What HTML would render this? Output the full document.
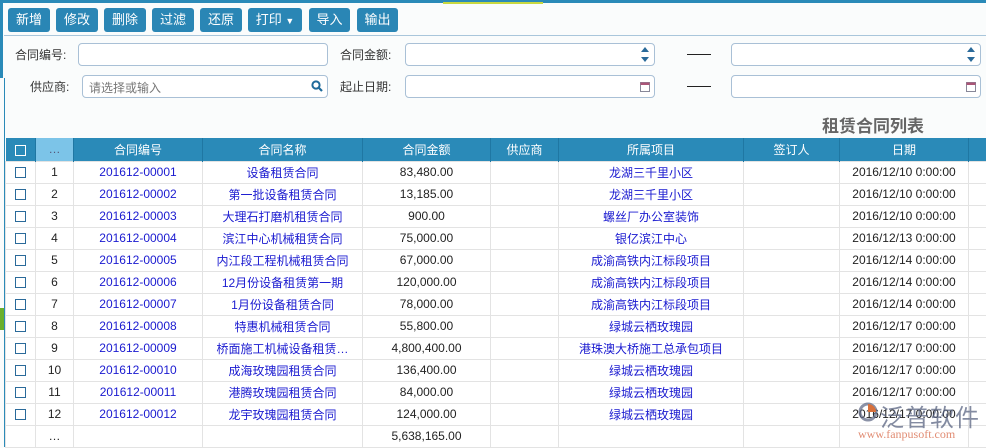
<!DOCTYPE html>
<html><head><meta charset="utf-8"><style>
*{box-sizing:border-box;margin:0;padding:0}
body{width:986px;height:447px;overflow:hidden;background:#fafcfc;font-family:"Liberation Sans","Noto Sans CJK SC",sans-serif;font-size:12px;color:#333;position:relative}
.top{position:absolute;left:0;top:0;width:986px;height:3px;background:#2a8ab8}
.top2{position:absolute;left:443px;top:2px;width:100px;height:2px;background:#c8d840}
.lstrip{position:absolute;left:0;top:0;width:3px;height:78px;background:#2a8ab8}
.lline{position:absolute;left:4px;top:78px;width:1px;height:369px;background:#2a8ab8}
.green{position:absolute;left:0;top:308px;width:4px;height:22px;background:#6ab02c}
.btn{position:absolute;top:8px;height:24px;background:#2a86b5;color:#fff;border-radius:3px;font-size:13px;text-align:center;line-height:24px}
.sep{position:absolute;left:4px;top:35px;width:982px;height:1px;background:#a9c6db}
.lbl{position:absolute;font-size:12px;color:#333}
.inp{position:absolute;height:23px;border:1px solid #a9c0d6;border-radius:4px;background:#fff}
.dash{position:absolute;width:24px;height:1px;background:#222}
.title{position:absolute;left:822px;top:112px;font-size:17px;font-weight:bold;color:#666}
table{position:absolute;left:5px;top:138px;border-collapse:collapse;table-layout:fixed;width:981px}
th{background:#2a8ab8;color:#fff;font-weight:normal;height:23px;border-right:1px solid #1f77a3;font-size:12px}
td{height:22px;border:1px solid #e3e3e3;text-align:center;font-size:12px;color:#222;background:#fff;white-space:nowrap;overflow:hidden}
td.b{color:#1a1ad0}
.cb{display:inline-block;width:11px;height:11px;border:1px solid #2a6a9a;vertical-align:middle}
th .cb{border-color:#fff;border-width:1.5px;width:11px;height:11px}
.sp{position:absolute;right:5px;top:2px;width:8px;height:17px}
.wm{position:absolute;left:858px;top:398px;color:rgba(90,100,130,.75);font-size:24px;letter-spacing:1px}
.wm2{position:absolute;left:858px;top:427px;color:rgba(220,120,90,.85);font-size:12px;font-family:"Liberation Serif",serif}
</style></head><body>
<div class="top"></div><div class="top2"></div><div class="lstrip"></div><div class="lline"></div><div class="green"></div>
<div class="btn" style="left:8px;width:42px">新增</div>
<div class="btn" style="left:56px;width:42px">修改</div>
<div class="btn" style="left:104px;width:42px">删除</div>
<div class="btn" style="left:152px;width:42px">过滤</div>
<div class="btn" style="left:200px;width:42px">还原</div>
<div class="btn" style="left:248px;width:54px">打印 <span style="font-size:9px">▼</span></div>
<div class="btn" style="left:309px;width:41px">导入</div>
<div class="btn" style="left:357px;width:41px">输出</div>
<div class="sep"></div>
<div class="lbl" style="left:15px;top:46px">合同编号:</div>
<div class="inp" style="left:78px;top:43px;width:250px"></div>
<div class="lbl" style="left:340px;top:46px">合同金额:</div>
<div class="inp" style="left:405px;top:43px;width:250px"><svg class="sp" viewBox="0 0 8 17"><path d="M0 6L4 1L8 6Z" fill="#2a6a9a"/><path d="M0 11L8 11L4 16Z" fill="#2a6a9a"/></svg></div>
<div class="dash" style="left:687px;top:54px"></div>
<div class="inp" style="left:731px;top:43px;width:250px"><svg class="sp" viewBox="0 0 8 17"><path d="M0 6L4 1L8 6Z" fill="#2a6a9a"/><path d="M0 11L8 11L4 16Z" fill="#2a6a9a"/></svg></div>
<div class="lbl" style="left:30px;top:78px">供应商:</div>
<div class="inp" style="left:82px;top:75px;width:246px"><span style="position:absolute;left:6px;top:3px;color:#777">请选择或输入</span><svg style="position:absolute;right:4px;top:4px" width="12" height="12"><circle cx="5" cy="5" r="3.6" fill="none" stroke="#1f6a9a" stroke-width="2"/><path d="M8 8l3 3" stroke="#1f6a9a" stroke-width="2.2"/></svg></div>
<div class="lbl" style="left:340px;top:78px">起止日期:</div>
<div class="inp" style="left:405px;top:75px;width:250px"><svg style="position:absolute;right:4px;top:5px" width="10" height="11"><rect x=".5" y="1.5" width="9" height="9" fill="#fff" stroke="#889"/><rect x=".5" y="1.5" width="9" height="2.5" fill="#a57"/></svg></div>
<div class="dash" style="left:687px;top:86px"></div>
<div class="inp" style="left:731px;top:75px;width:250px"><svg style="position:absolute;right:4px;top:5px" width="10" height="11"><rect x=".5" y="1.5" width="9" height="9" fill="#fff" stroke="#889"/><rect x=".5" y="1.5" width="9" height="2.5" fill="#a57"/></svg></div>
<div class="title">租赁合同列表</div>
<table>
<colgroup><col style="width:30px"><col style="width:38px"><col style="width:129px"><col style="width:160px"><col style="width:128px"><col style="width:68px"><col style="width:185px"><col style="width:96px"><col style="width:129px"><col style="width:18px"></colgroup>
<tr><th><span class="cb"></span></th><th style="background:#7cc4e8;color:#557">…</th><th>合同编号</th><th>合同名称</th><th>合同金额</th><th>供应商</th><th>所属项目</th><th>签订人</th><th>日期</th><th></th></tr>
<tr><td><span class="cb"></span></td><td>1</td><td class="b">201612-00001</td><td class="b">设备租赁合同</td><td>83,480.00</td><td></td><td class="b">龙湖三千里小区</td><td></td><td>2016/12/10 0:00:00</td><td></td></tr>
<tr><td><span class="cb"></span></td><td>2</td><td class="b">201612-00002</td><td class="b">第一批设备租赁合同</td><td>13,185.00</td><td></td><td class="b">龙湖三千里小区</td><td></td><td>2016/12/10 0:00:00</td><td></td></tr>
<tr><td><span class="cb"></span></td><td>3</td><td class="b">201612-00003</td><td class="b">大理石打磨机租赁合同</td><td>900.00</td><td></td><td class="b">螺丝厂办公室装饰</td><td></td><td>2016/12/10 0:00:00</td><td></td></tr>
<tr><td><span class="cb"></span></td><td>4</td><td class="b">201612-00004</td><td class="b">滨江中心机械租赁合同</td><td>75,000.00</td><td></td><td class="b">银亿滨江中心</td><td></td><td>2016/12/13 0:00:00</td><td></td></tr>
<tr><td><span class="cb"></span></td><td>5</td><td class="b">201612-00005</td><td class="b">内江段工程机械租赁合同</td><td>67,000.00</td><td></td><td class="b">成渝高铁内江标段项目</td><td></td><td>2016/12/14 0:00:00</td><td></td></tr>
<tr><td><span class="cb"></span></td><td>6</td><td class="b">201612-00006</td><td class="b">12月份设备租赁第一期</td><td>120,000.00</td><td></td><td class="b">成渝高铁内江标段项目</td><td></td><td>2016/12/14 0:00:00</td><td></td></tr>
<tr><td><span class="cb"></span></td><td>7</td><td class="b">201612-00007</td><td class="b">1月份设备租赁合同</td><td>78,000.00</td><td></td><td class="b">成渝高铁内江标段项目</td><td></td><td>2016/12/14 0:00:00</td><td></td></tr>
<tr><td><span class="cb"></span></td><td>8</td><td class="b">201612-00008</td><td class="b">特惠机械租赁合同</td><td>55,800.00</td><td></td><td class="b">绿城云栖玫瑰园</td><td></td><td>2016/12/17 0:00:00</td><td></td></tr>
<tr><td><span class="cb"></span></td><td>9</td><td class="b">201612-00009</td><td class="b">桥面施工机械设备租赁…</td><td>4,800,400.00</td><td></td><td class="b">港珠澳大桥施工总承包项目</td><td></td><td>2016/12/17 0:00:00</td><td></td></tr>
<tr><td><span class="cb"></span></td><td>10</td><td class="b">201612-00010</td><td class="b">成海玫瑰园租赁合同</td><td>136,400.00</td><td></td><td class="b">绿城云栖玫瑰园</td><td></td><td>2016/12/17 0:00:00</td><td></td></tr>
<tr><td><span class="cb"></span></td><td>11</td><td class="b">201612-00011</td><td class="b">港腾玫瑰园租赁合同</td><td>84,000.00</td><td></td><td class="b">绿城云栖玫瑰园</td><td></td><td>2016/12/17 0:00:00</td><td></td></tr>
<tr><td><span class="cb"></span></td><td>12</td><td class="b">201612-00012</td><td class="b">龙宇玫瑰园租赁合同</td><td>124,000.00</td><td></td><td class="b">绿城云栖玫瑰园</td><td></td><td>2016/12/17 0:00:00</td><td></td></tr>
<tr><td></td><td>…</td><td></td><td></td><td>5,638,165.00</td><td></td><td></td><td></td><td></td><td></td></tr>
</table>
<svg style="position:absolute;left:858px;top:401px" width="20" height="22"><circle cx="10" cy="11" r="8" fill="none" stroke="rgba(90,100,130,.7)" stroke-width="3"/><path d="M10 3A8 8 0 0 1 18 11L10 11Z" fill="#d8703a"/></svg>
<div class="wm" style="left:880px">泛普软件</div>
<div class="wm2">www.fanpusoft.com</div>
</body></html>
